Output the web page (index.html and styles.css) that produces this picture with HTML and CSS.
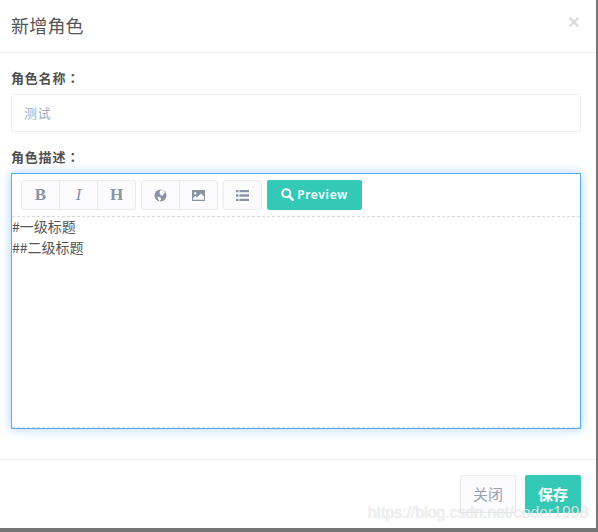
FILE: index.html
```html
<!DOCTYPE html>
<html>
<head>
  <meta charset="utf-8">
  <title>新增角色</title>
  <link rel="stylesheet" href="styles.css">
</head>
<body>
  <div class="modal">
    <div class="modal-header">
      <h4>新增角色</h4>
      <span class="close">×</span>
    </div>
    <div class="modal-body">
      <label>角色名称<span class="colon">：</span></label>
      <div class="input">测试</div>
      <label>角色描述<span class="colon">：</span></label>
      <div class="editor">
        <div class="toolbar">
          <div class="btn-group">
            <span class="tool"><b class="serif">B</b></span>
            <span class="tool"><i class="serif">I</i></span>
            <span class="tool"><b class="serif">H</b></span>
          </div>
          <div class="btn-group">
            <span class="tool">
              <svg width="13" height="13" viewBox="0 0 13 13"><circle cx="6.5" cy="6.5" r="6" fill="#8a93a6"/><path d="M6 1.5l3-.5 2 2.500-1.500 1.500-1 2-2-1-1-2zM3.500 7.500l3 1 .5 2-1.500 1.500-1.500-2z" fill="#fff"/></svg>
            </span>
            <span class="tool">
              <svg width="13" height="11" viewBox="0 0 13 11"><path fill-rule="evenodd" d="M0 0h13v11H0zM3.200 2a1.200 1.200 0 1 0 0 2.400 1.200 1.200 0 0 0 0-2.400zM1 9.800h11V6.500L9 3.500 5.200 7.300 3.500 5.800 1 8z" fill="#8a93a6"/></svg>
            </span>
          </div>
          <div class="btn-group">
            <span class="tool">
              <svg width="13" height="11" viewBox="0 0 13 11" fill="#8a93a6"><path d="M0 0h2.500v2.300H0zM3.500 0H13v2.300H3.500zM0 4.300h2.500v2.400H0zM3.500 4.300H13v2.400H3.500zM0 8.700h2.500V11H0zM3.500 8.700H13V11H3.500z"/></svg>
            </span>
          </div>
          <span class="preview">
            <svg width="13" height="13" viewBox="0 0 13 13"><circle cx="5.300" cy="5.300" r="4" fill="none" stroke="#fff" stroke-width="2"/><path d="M8.300 8.300l3.500 3.500" stroke="#fff" stroke-width="2.400" stroke-linecap="round"/></svg>
            Preview
          </span>
        </div>
        <div class="content">
          <div>#一级标题</div>
          <div>##二级标题</div>
        </div>
      </div>
    </div>
    <div class="modal-footer">
      <span class="btn btn-light">关闭</span>
      <span class="btn btn-primary">保存</span>
    </div>
  </div>
  <div class="watermark">https://blog.csdn.net/coder1998</div>
</body>
</html>
```

FILE: styles.css
```css
* {
  margin: 0;
  padding: 0;
  box-sizing: border-box;
}

body {
  width: 598px;
  height: 532px;
  background: #757575;
  font-family: "Noto Sans CJK SC", "Noto Sans", sans-serif;
  color: #4a4a4a;
  overflow: hidden;
  position: relative;
}

.modal {
  width: 596px;
  height: 528px;
  background: #fff;
  display: flex;
  flex-direction: column;
}

.modal-header {
  height: 53px;
  padding: 0 16px 3px 11px;
  border-bottom: 1px solid #eff0f2;
  display: flex;
  align-items: center;
  justify-content: space-between;
}

.modal-header h4 {
  font-size: 18px;
  font-weight: 400;
  letter-spacing: 0.2px;
  color: #555;
}

.close {
  font-family: "Liberation Sans", sans-serif;
  font-size: 21px;
  font-weight: 700;
  color: #dcdcdc;
  line-height: 1;
  margin-top: -6px;
}

.modal-body {
  flex: 1;
  padding: 15px 15px 0 11px;
}

label {
  display: block;
  height: 20px;
  line-height: 20px;
  margin-bottom: 6px;
  font-size: 13px;
  letter-spacing: 0.8px;
  font-weight: 700;
  color: #4f4f4f;
}

.colon {
  font-family: "Noto Sans CJK TC", sans-serif;
}

.input {
  height: 38px;
  line-height: 36px;
  margin-bottom: 15px;
  padding: 0 12px;
  border: 1px solid #ebedf0;
  border-radius: 2px;
  font-size: 13px;
  letter-spacing: 0.5px;
  color: #a3acbd;
}

.editor {
  height: 256px;
  border: 1px solid #5aabee;
  box-shadow: 0 0 10px rgba(90, 171, 238, 0.5);
  display: flex;
  flex-direction: column;
}

.toolbar {
  height: 43px;
  padding: 6px 9px;
  border-bottom: 1px dashed #d8d8d8;
  display: flex;
  gap: 5px;
}

.btn-group {
  display: flex;
  height: 30px;
  background: #fbfbfd;
  border: 1px solid #e8eaed;
  border-radius: 3px;
}

.tool {
  width: 38px;
  display: flex;
  align-items: center;
  justify-content: center;
  border-left: 1px solid #e8eaed;
  color: #8a93a6;
  font-size: 17px;
}

.tool:first-child {
  width: 37px;
  border-left: 0;
}

.serif {
  font-family: "Liberation Serif", serif;
}

.preview {
  width: 95px;
  height: 30px;
  padding-bottom: 1px;
  background: #34c9b7;
  border-radius: 2px;
  color: #fff;
  font-family: "Noto Sans", sans-serif;
  font-size: 12px;
  font-weight: 600;
  letter-spacing: 0.7px;
  display: flex;
  align-items: center;
  justify-content: center;
  gap: 3px;
}

.content {
  flex: 1;
  font-size: 14px;
  line-height: 21px;
  color: #555;
  margin-top: -1px;
  border-bottom: 1px dashed #d0d8e0;
}

.modal-footer {
  height: 69px;
  padding: 15px 15px 0 0;
  border-top: 1px solid #eff0f2;
  display: flex;
  justify-content: flex-end;
  gap: 9px;
}

.btn {
  width: 56px;
  height: 38px;
  padding-bottom: 1px;
  border-radius: 2px;
  font-size: 15px;
  display: flex;
  align-items: center;
  justify-content: center;
}

.btn-light {
  background: #fbfbfd;
  border: 1px solid #e8eaed;
  color: #9aa2b2;
}

.btn-primary {
  background: #34c9b7;
  color: #fff;
  font-weight: 700;
}

.watermark {
  position: absolute;
  left: 368px;
  top: 503px;
  font-family: "Liberation Sans", sans-serif;
  font-size: 15.8px;
  line-height: 20px;
  color: rgba(255, 255, 255, 0.7);
  text-shadow: 0 0 1px rgba(120, 120, 120, 0.4);
  white-space: nowrap;
}
```
